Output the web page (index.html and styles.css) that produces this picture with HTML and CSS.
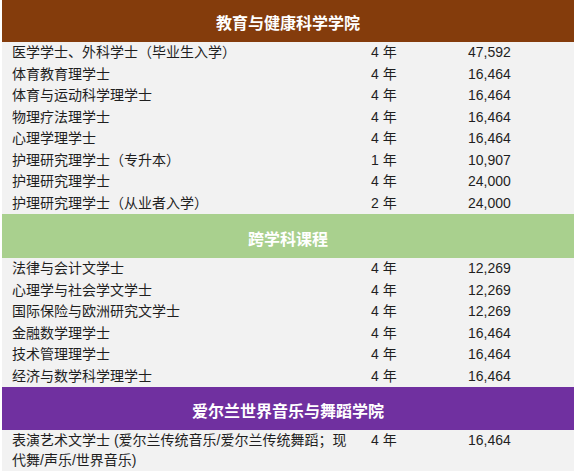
FILE: index.html
```html
<!DOCTYPE html>
<html lang="zh">
<head>
<meta charset="utf-8">
<link rel="stylesheet" href="styles.css">
</head>
<body>
<div class="sheet">
  <div class="band band-brown">教育与健康科学学院</div>
  <div class="row"><div class="c1">医学学士、外科学士（毕业生入学）</div><div class="c2">4 年</div><div class="c3">47,592</div></div>
  <div class="row"><div class="c1">体育教育理学士</div><div class="c2">4 年</div><div class="c3">16,464</div></div>
  <div class="row"><div class="c1">体育与运动科学理学士</div><div class="c2">4 年</div><div class="c3">16,464</div></div>
  <div class="row"><div class="c1">物理疗法理学士</div><div class="c2">4 年</div><div class="c3">16,464</div></div>
  <div class="row"><div class="c1">心理学理学士</div><div class="c2">4 年</div><div class="c3">16,464</div></div>
  <div class="row"><div class="c1">护理研究理学士（专升本）</div><div class="c2">1 年</div><div class="c3">10,907</div></div>
  <div class="row"><div class="c1">护理研究理学士</div><div class="c2">4 年</div><div class="c3">24,000</div></div>
  <div class="row"><div class="c1">护理研究理学士（从业者入学）</div><div class="c2">2 年</div><div class="c3">24,000</div></div>
  <div class="band band-green">跨学科课程</div>
  <div class="row"><div class="c1">法律与会计文学士</div><div class="c2">4 年</div><div class="c3">12,269</div></div>
  <div class="row"><div class="c1">心理学与社会学文学士</div><div class="c2">4 年</div><div class="c3">12,269</div></div>
  <div class="row"><div class="c1">国际保险与欧洲研究文学士</div><div class="c2">4 年</div><div class="c3">12,269</div></div>
  <div class="row"><div class="c1">金融数学理学士</div><div class="c2">4 年</div><div class="c3">16,464</div></div>
  <div class="row"><div class="c1">技术管理理学士</div><div class="c2">4 年</div><div class="c3">16,464</div></div>
  <div class="row"><div class="c1">经济与数学科学理学士</div><div class="c2">4 年</div><div class="c3">16,464</div></div>
  <div class="band band-purple">爱尔兰世界音乐与舞蹈学院</div>
  <div class="row"><div class="c1">表演艺术文学士 (爱尔兰传统音乐/爱尔兰传统舞蹈；现代舞/声乐/世界音乐)</div><div class="c2">4 年</div><div class="c3">16,464</div></div>
</div>
</body>
</html>
```
FILE: styles.css
```css
html, body {
  margin: 0;
  padding: 0;
  background: #ffffff;
}
body {
  font-family: "Liberation Sans", "Noto Sans CJK SC", sans-serif;
  font-size: 14px;
  color: #1f1f1f;
}
.sheet {
  margin: 0 2px;
  width: 572px;
  background: #f2f2f2;
}
.band {
  color: #ffffff;
  font-weight: bold;
  font-size: 16px;
  text-align: center;
  display: flex;
  align-items: center;
  justify-content: center;
}
.band-brown {
  background: #843c0c;
  height: 42px;
  padding-top: 1px;
  box-sizing: border-box;
}
.band-green {
  background: #a9d08e;
  height: 44px;
  padding-top: 3px;
  box-sizing: border-box;
}
.band-purple {
  background: #7030a0;
  height: 43px;
  padding-top: 2px;
  box-sizing: border-box;
}
.row {
  display: grid;
  grid-template-columns: 364px 97px 111px;
  line-height: 19.5px;
  padding: 1px 0;
}
.c1 {
  padding-left: 10px;
  padding-right: 16px;
}
.c2 {
  padding-left: 5px;
}
.c3 {
  padding-left: 5px;
}
```
